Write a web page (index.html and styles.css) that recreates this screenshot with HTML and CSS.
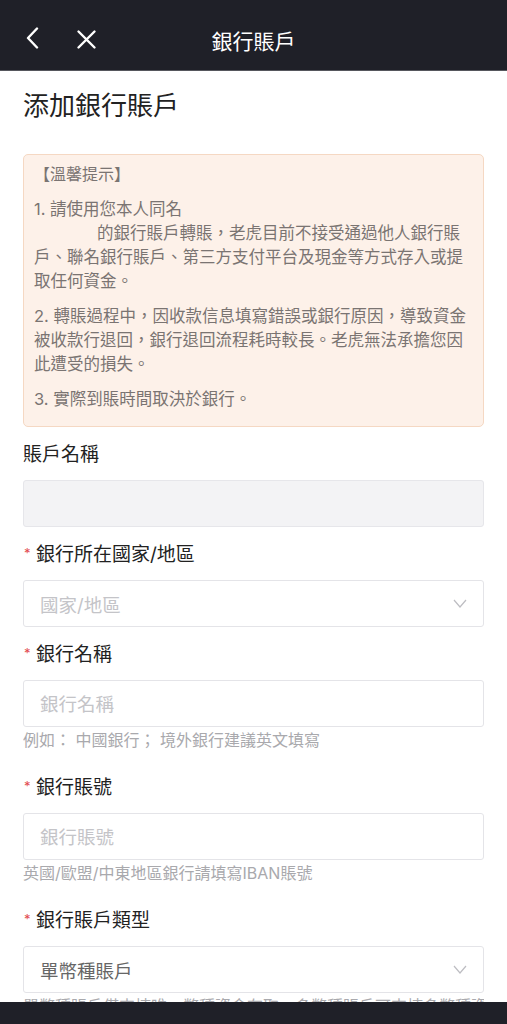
FILE: index.html
```html
<!DOCTYPE html>
<html>
<head>
<meta name="viewport" content="width=device-width, initial-scale=1">
<link rel="stylesheet" href="styles.css">
</head>
<body>

<div class="navbar">
    <span class="navBtn backBtn">
        <svg width="16" height="22" viewBox="0 0 16 22"><path d="M12 1.5 L3 11 L12 20.5" fill="none" stroke="#fff" stroke-width="2.4" stroke-linecap="round" stroke-linejoin="round"/></svg>
    </span>
    <span class="navBtn closeBtn">
        <svg width="21" height="21" viewBox="0 0 21 21"><path d="M2.5 2.5 L18.5 18.5 M18.5 2.5 L2.5 18.5" fill="none" stroke="#fff" stroke-width="2.4" stroke-linecap="round"/></svg>
    </span>
    <h1 class="navTitle">銀行賬戶</h1>
</div>

<div class="content">
    <h2 class="pageTitle">添加銀行賬戶</h2>

    <div class="tips">
        <p class="tipsTitle">【溫馨提示】</p>
        <p>1. 請使用您本人同名<br><span class="nameGap"></span>的銀行賬戶轉賬，老虎目前不接受通過他人銀行賬戶、聯名銀行賬戶、第三方支付平台及現金等方式存入或提取任何資金。</p>
        <p>2. 轉賬過程中，因收款信息填寫錯誤或銀行原因，導致資金被收款行退回，銀行退回流程耗時較長。老虎無法承擔您因此遭受的損失。</p>
        <p>3. 實際到賬時間取決於銀行。</p>
    </div>

    <div class="field">
        <div class="label">賬戶名稱</div>
        <input class="input disabled" type="text" disabled>
    </div>

    <div class="field">
        <div class="label"><span class="req">*</span>銀行所在國家/地區</div>
        <div class="input select">
            <span class="placeholder">國家/地區</span>
            <svg class="arrow" width="14" height="9" viewBox="0 0 14 9"><path d="M1 1 L7 8 L13 1" fill="none" stroke="#bdbdc2" stroke-width="1.2"/></svg>
        </div>
    </div>

    <div class="field">
        <div class="label"><span class="req">*</span>銀行名稱</div>
        <input class="input" type="text" placeholder="銀行名稱">
        <div class="hint">例如： 中國銀行； 境外銀行建議英文填寫</div>
    </div>

    <div class="field">
        <div class="label"><span class="req">*</span>銀行賬號</div>
        <input class="input" type="text" placeholder="銀行賬號">
        <div class="hint">英國/歐盟/中東地區銀行請填寫IBAN賬號</div>
    </div>

    <div class="field">
        <div class="label"><span class="req">*</span>銀行賬戶類型</div>
        <div class="input select">
            <span class="value">單幣種賬戶</span>
            <svg class="arrow" width="14" height="9" viewBox="0 0 14 9"><path d="M1 1 L7 8 L13 1" fill="none" stroke="#bdbdc2" stroke-width="1.2"/></svg>
        </div>
        <div class="hint">單幣種賬戶僅支持唯一幣種資金存取，多幣種賬戶可支持多幣種資金存取</div>
    </div>
</div>

<div class="bottomBar"></div>

</body>
</html>
```

FILE: styles.css
```css
/* Page base */
* {
    box-sizing: border-box;
}

body {
    margin: 0;
    background: #fff;
    font-family: Inter, "Noto Sans CJK TC", sans-serif;
    color: #222;
}

/* Top navigation bar */
.navbar {
    position: relative;
    height: 71px;
    background: #1f2028;
    border-bottom: 1px solid #56575d;
    display: flex;
    align-items: center;
    padding: 0 0 0 25px;
    gap: 34px;
}

.navBtn {
    display: flex;
    align-items: center;
}

.backBtn {
    padding-top: 5px;
}

.closeBtn {
    padding-top: 8px;
    margin-left: 1px;
}

.navTitle {
    position: absolute;
    left: 0;
    right: 0;
    top: 0;
    margin: 0;
    line-height: 84px;
    height: 70px;
    text-align: center;
    font-size: 21px;
    font-weight: normal;
    color: #fff;
    pointer-events: none;
}

/* Main content */
.content {
    padding: 0 23px;
}

.pageTitle {
    margin: 17px 0 30px;
    font-size: 26px;
    line-height: 36px;
    font-weight: normal;
    color: #222;
}

/* Warm tips box */
.tips {
    background: #fdf1e9;
    border: 1px solid #f5d8c3;
    border-radius: 5px;
    padding: 7px 10px 15px;
    color: #7a7472;
    font-size: 16.5px;
    line-height: 24px;
}

.tips p {
    margin: 11px 0 0;
}

.tips p.tipsTitle {
    margin: 0;
    font-size: 16px;
}

.nameGap {
    display: inline-block;
    width: 63px;
}

/* Form fields */
.field {
    margin-top: 15px;
}

.field:first-of-type {
    margin-top: 21px;
}

.label {
    font-size: 19px;
    line-height: 26px;
    color: #222;
    margin-bottom: 12px;
}

.req {
    color: #e24a4f;
    font-size: 13px;
    display: inline-block;
    width: 13px;
    vertical-align: top;
    line-height: 22px;
    padding-left: 1px;
}

.input {
    display: flex;
    align-items: center;
    width: 100%;
    height: 47px;
    margin: 0;
    padding: 0 16px;
    border: 1px solid #e4e4e8;
    border-radius: 3px;
    background: #fff;
    font-family: Inter, "Noto Sans CJK TC", sans-serif;
    font-size: 18.5px;
    color: #333;
    outline: none;
}

.input::placeholder {
    color: #c4c4c8;
}

.input.disabled {
    background: #f3f3f5;
    border-color: #e6e6ea;
}

.select {
    justify-content: space-between;
}

.placeholder {
    color: #c4c4c8;
}

.value {
    color: #666;
}

.hint {
    padding: 2px 0 9px;
    font-size: 16px;
    line-height: 22px;
    color: #a9a9ad;
    white-space: nowrap;
    overflow: hidden;
}

/* Bottom home indicator bar */
.bottomBar {
    position: fixed;
    left: 0;
    right: 0;
    bottom: 0;
    height: 22px;
    background: #1f2028;
}
```
